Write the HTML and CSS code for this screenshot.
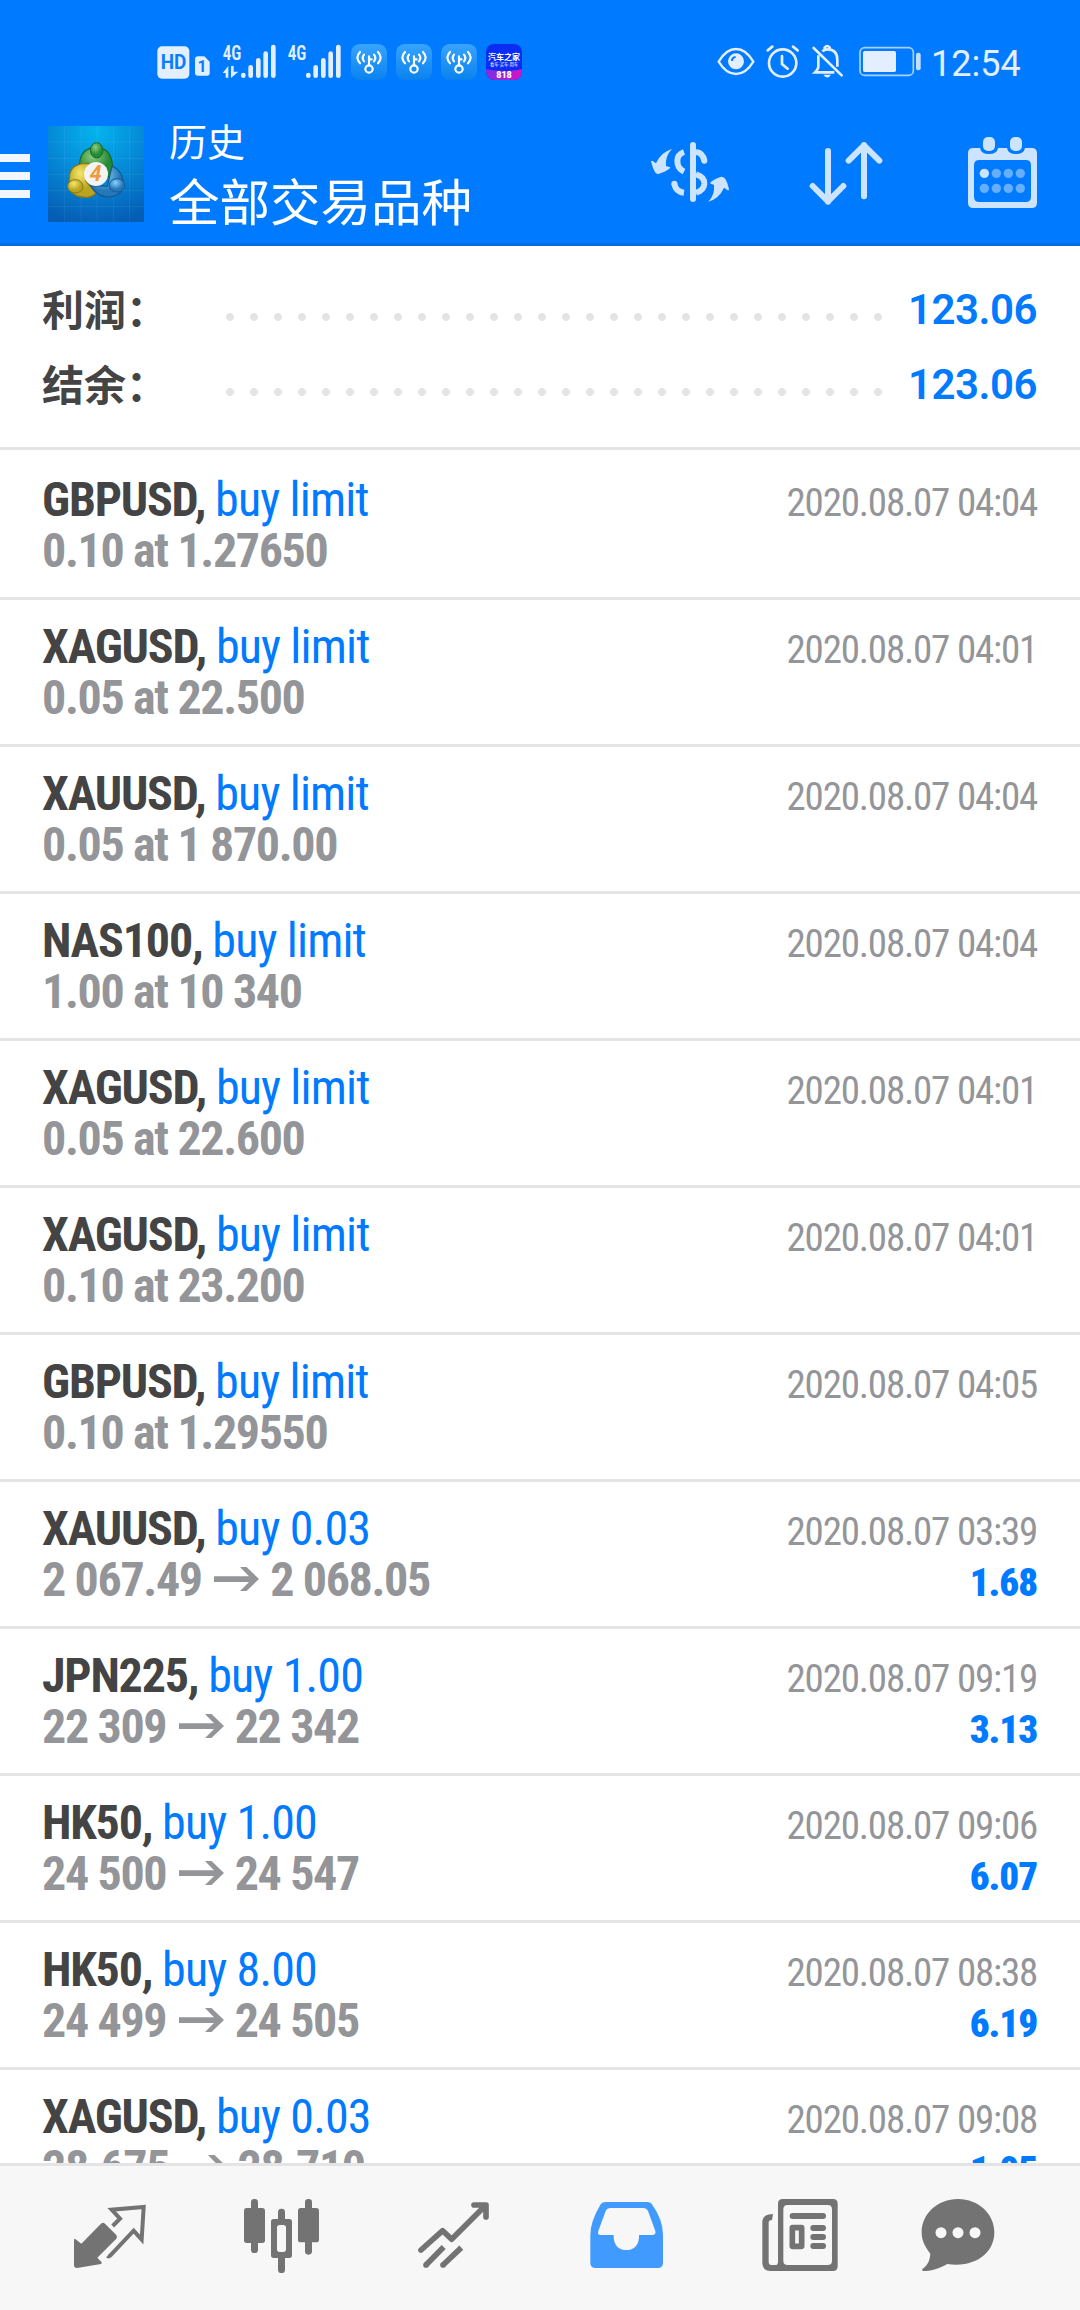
FILE: index.html
```html
<!DOCTYPE html>
<html lang="zh-CN">
<head>
<meta charset="utf-8">
<title>历史</title>
<link rel="stylesheet" href="styles.css">
</head>
<body>
<svg class="defs" aria-hidden="true">
  <defs>
    <linearGradient id="key-bg" x1="0" y1="0" x2="0" y2="1"><stop offset="0" stop-color="#38a4ff"/><stop offset="1" stop-color="#0a82ee"/></linearGradient>
    <symbol id="key" viewBox="0 0 108 108">
      <rect width="108" height="108" rx="26" fill="url(#key-bg)"/>
      <g fill="none" stroke="#fff" stroke-width="6.500" stroke-linecap="round">
        <circle cx="54" cy="75" r="11"/>
        <path d="M54 64V37M55 46h7M39 32q-8 10 0 20M27 24q-6 6-8 17q1 10 8 17M69 32q8 10 0 20M81 24q6 6 8 17q-1 10-8 17"/>
      </g>
    </symbol>
    <symbol id="bars" viewBox="0 0 110 108">
      <g stroke="#e3efff" stroke-width="14" stroke-linecap="round"><path d="M9 93v2M31 70v25M54 49v46M76 29v66M99 9v86"/></g>
    </symbol>
    <symbol id="arrow" viewBox="0 0 45 26">
      <path d="M0 10.300h35L26 1h6.500L45 13 32.500 25H26l9-9.100H0z" fill="#949599"/>
    </symbol>
  </defs>
</svg>
<div class="screen">
  <header class="header">
    <div class="status">
      <svg class="hd" width="33" height="36" viewBox="51 42 99 108"><rect x="52" y="49" width="96" height="97" rx="14" fill="#e3efff"/><text x="62" y="118" font-size="58" font-weight="700" textLength="77" lengthAdjust="spacingAndGlyphs" fill="#0a7dff">HD</text></svg>
      <svg class="sim" width="16" height="36" viewBox="162 42 48 108"><path d="M175 79h18l16 16v34q0 8-8 8h-27q-9 0-9-8V88q0-9 10-9z" fill="#e3efff"/><text x="186" y="127" text-anchor="middle" font-size="48" font-weight="700" fill="#0a7dff">1</text></svg>
      <svg class="sig" width="55" height="36" viewBox="246 42 165 108"><text class="cond" x="248" y="90" font-size="60" font-weight="600" textLength="56" lengthAdjust="spacingAndGlyphs" fill="#e3efff">4G</text><use href="#bars" x="301" y="42" width="110" height="108"/><path d="M248 129l17-21v35h-8v-14zM273 108h8v17h14l-22 19z" fill="#e3efff"/></svg>
      <svg class="sig2" width="55" height="36" viewBox="441 42 165 108"><text class="cond" x="443" y="90" font-size="60" font-weight="600" textLength="56" lengthAdjust="spacingAndGlyphs" fill="#e3efff">4G</text><use href="#bars" x="496" y="42" width="110" height="108"/></svg>
      <svg class="app" width="36" height="36"><use href="#key"/></svg>
      <svg class="app" width="36" height="36"><use href="#key"/></svg>
      <svg class="app" width="36" height="36"><use href="#key"/></svg>
      <svg class="app" width="36" height="36" viewBox="0 0 108 108">
        <defs><clipPath id="rr"><rect width="108" height="108" rx="24"/></clipPath><linearGradient id="pk"><stop offset="0" stop-color="#7a30e0"/><stop offset="1" stop-color="#d414c4"/></linearGradient></defs>
        <g clip-path="url(#rr)"><rect width="108" height="108" fill="#0a2cf5"/><path d="M0 76q54 10 108 0v32H0z" fill="url(#pk)"/></g>
        <g fill="#fff" text-anchor="middle"><text x="54" y="49" font-size="24" font-weight="700">汽车之家</text><text x="54" y="65" font-size="13">看车·买车·用车</text><text x="54" y="103" font-size="27" font-weight="900">818</text></g>
      </svg>
      <svg class="eye" width="38" height="36" viewBox="51 42 114 108"><path d="M56 95q22-38 52-38t52 38q-22 37-52 37T56 95z" fill="none" stroke="#e3efff" stroke-width="7"/><circle cx="108" cy="94" r="24" fill="#e3efff"/><path d="M96 93q0-11 11-12" fill="none" stroke="#0a7dff" stroke-width="6"/></svg>
      <svg class="alarm" width="35" height="36" viewBox="195 42 105 108"><g fill="none" stroke="#e3efff" stroke-width="8" stroke-linecap="round"><circle cx="248" cy="99" r="41"/><path d="M246 78v24l17 14M203 61l14-11M279 50l14 11"/></g></svg>
      <svg class="bell" width="32" height="36" viewBox="333 42 96 108"><g fill="none" stroke="#e3efff" stroke-width="8"><path d="M341 54l84 82" stroke-linecap="round"/><path d="M355 76v34q0 7-10 17h58M367 64q6-6 15-6q30 0 30 32v20M374 58v-5q7-10 15 0v5"/></g><path d="M370 134h23q-11 17-23 0z" fill="#e3efff"/></svg>
      <svg class="battery" width="63" height="36" viewBox="477 42 189 108"><rect x="480" y="53" width="160" height="83" rx="14" fill="none" stroke="#a9d0ff" stroke-width="5"/><rect x="489" y="63" width="99" height="63" rx="5" fill="#e3efff"/><rect x="648" y="68" width="14" height="53" rx="6" fill="#c4dfff"/></svg>
      <span class="clock">12:54</span>
    </div>
    <div class="bar">
      <svg class="menu" width="30" height="44" viewBox="0 0 30 44"><path d="M0 0h30v8H0zM0 18h30v8H0zM0 36h30v8H0z" fill="#f0f7ff"/></svg>
      <svg class="logo" width="96" height="96" viewBox="24 18 288 288">
        <defs>
          <radialGradient id="lb" cx=".5" cy=".05" r="1"><stop offset="0" stop-color="#04b4ee"/><stop offset=".5" stop-color="#0588d6"/><stop offset="1" stop-color="#055cb4"/></radialGradient>
          <radialGradient id="gr" cx=".4" cy=".3"><stop offset="0" stop-color="#8fcc80"/><stop offset="1" stop-color="#238a35"/></radialGradient>
          <radialGradient id="ye" cx=".4" cy=".3"><stop offset="0" stop-color="#f5e66a"/><stop offset="1" stop-color="#b9a41f"/></radialGradient>
          <radialGradient id="bl" cx=".4" cy=".3"><stop offset="0" stop-color="#8bd0f8"/><stop offset="1" stop-color="#2478ba"/></radialGradient>
        </defs>
        <rect x="24" y="18" width="288" height="288" fill="url(#lb)"/>
        <path d="M74 18v288M123 18v288M171 18v288M220 18v288M268 18v288M24 66h288M24 115h288M24 163h288M24 212h288M24 260h288" stroke="#fff" stroke-opacity=".1" stroke-width="2"/>
        <path d="M118 142q0-60 52-60t49 86l-12 4-37-38-37 2z" fill="url(#gr)" stroke="#176a2a" stroke-width="4"/>
        <path d="M146 130q-58-2-58 46v30q14 28 54 26 18-2 26-14l-30-34z" fill="url(#ye)" stroke="#85791b" stroke-width="4"/>
        <path d="M216 138q34 16 34 56-2 36-50 37-30-3-48-34l50 2z" fill="url(#bl)" stroke="#155b94" stroke-width="4"/>
        <ellipse cx="170" cy="91" rx="19" ry="23" fill="url(#gr)" stroke="#176a2a" stroke-width="3"/>
        <ellipse cx="106" cy="199" rx="23" ry="20" fill="url(#ye)" stroke="#85791b" stroke-width="3"/>
        <ellipse cx="231" cy="196" rx="23" ry="20" fill="url(#bl)" stroke="#155b94" stroke-width="3"/>
        <circle cx="168" cy="162" r="36" fill="#f2f3f4"/>
        <text x="167" y="184" text-anchor="middle" font-size="64" font-style="italic" font-weight="700" fill="#f09a3e">4</text>
      </svg>
      <div class="titles"><div class="title">历史</div><div class="subtitle">全部交易品种</div></div>
      <svg class="i-cur" width="80" height="75" viewBox="60 45 240 225">
        <path d="M189 75v162" stroke="#cce4ff" stroke-width="18" stroke-linecap="round"/>
        <path d="M162 96q-20 7-20 27 0 22 20 32M133 191q4 24 29 27M198 96q20 2 25 26M198 163q26 7 25 29-2 20-25 26" fill="none" stroke="#cce4ff" stroke-width="18"/>
        <circle cx="133" cy="191" r="9" fill="#cce4ff"/><circle cx="223" cy="122" r="9" fill="#cce4ff"/>
        <path d="M126 87q-21 21-18 51l13 4q-2 8-30 18-7 4-13 0-7-6-15-36 2-3 5-1l10 7q14-33 48-43zM235 245q20-21 17-50l-12-5q2-8 31-19 7-2 13 4 8 9 13 34-2 3-5 1l-10-7q-14 32-47 42z" fill="#cce4ff"/>
      </svg>
      <svg class="i-sort" width="80" height="75" viewBox="528 45 240 225"><path d="M594 93v152M548 198l46 46 46-46M702 229V75M656 122l46-46 46 46" fill="none" stroke="#cce4ff" stroke-width="18" stroke-linecap="round" stroke-linejoin="round"/></svg>
      <svg class="i-cal" width="80" height="75" viewBox="999 45 240 225">
        <path fill-rule="evenodd" d="M1030 84h20q3 18 27 18t27-18h27q3 18 27 18t27-18h20q16 0 16 16v148q0 16-16 16h-175q-16 0-16-16V100q0-16 16-16zM1048 120q-16 0-16 16v94q0 16 16 16h139q16 0 16-16v-94q0-16-16-16z" fill="#cce4ff"/>
        <rect x="1059" y="51" width="36" height="42" rx="15" fill="#cce4ff"/><rect x="1140" y="51" width="36" height="42" rx="15" fill="#cce4ff"/>
        <circle cx="1063" cy="160" r="14" fill="#cce4ff"/>
        <g fill="#66afff"><circle cx="1099" cy="160" r="14"/><circle cx="1135" cy="160" r="14"/><circle cx="1171" cy="160" r="14"/><circle cx="1063" cy="205" r="14"/><circle cx="1099" cy="205" r="14"/><circle cx="1135" cy="205" r="14"/><circle cx="1171" cy="205" r="14"/></g>
      </svg>
    </div>
  </header>

  <main class="list">
    <section class="summary">
      <div class="sum"><span class="label">利润：</span><i class="dots"></i><b>123.06</b></div>
      <div class="sum"><span class="label">结余：</span><i class="dots"></i><b>123.06</b></div>
    </section>
    <article class="row first"><div class="line"><span><b>GBPUSD,</b> <em>buy limit</em></span><time>2020.08.07 04:04</time></div><div class="line price">0.10 at 1.27650</div></article>
    <article class="row"><div class="line"><span><b>XAGUSD,</b> <em>buy limit</em></span><time>2020.08.07 04:01</time></div><div class="line price">0.05 at 22.500</div></article>
    <article class="row"><div class="line"><span><b>XAUUSD,</b> <em>buy limit</em></span><time>2020.08.07 04:04</time></div><div class="line price">0.05 at 1 870.00</div></article>
    <article class="row"><div class="line"><span><b>NAS100,</b> <em>buy limit</em></span><time>2020.08.07 04:04</time></div><div class="line price">1.00 at 10 340</div></article>
    <article class="row"><div class="line"><span><b>XAGUSD,</b> <em>buy limit</em></span><time>2020.08.07 04:01</time></div><div class="line price">0.05 at 22.600</div></article>
    <article class="row"><div class="line"><span><b>XAGUSD,</b> <em>buy limit</em></span><time>2020.08.07 04:01</time></div><div class="line price">0.10 at 23.200</div></article>
    <article class="row"><div class="line"><span><b>GBPUSD,</b> <em>buy limit</em></span><time>2020.08.07 04:05</time></div><div class="line price">0.10 at 1.29550</div></article>
    <article class="row"><div class="line"><span><b>XAUUSD,</b> <em>buy 0.03</em></span><time>2020.08.07 03:39</time></div><div class="line price"><span>2 067.49 <svg class="to"><use href="#arrow"/></svg> 2 068.05</span><strong>1.68</strong></div></article>
    <article class="row"><div class="line"><span><b>JPN225,</b> <em>buy 1.00</em></span><time>2020.08.07 09:19</time></div><div class="line price"><span>22 309 <svg class="to"><use href="#arrow"/></svg> 22 342</span><strong>3.13</strong></div></article>
    <article class="row"><div class="line"><span><b>HK50,</b> <em>buy 1.00</em></span><time>2020.08.07 09:06</time></div><div class="line price"><span>24 500 <svg class="to"><use href="#arrow"/></svg> 24 547</span><strong>6.07</strong></div></article>
    <article class="row"><div class="line"><span><b>HK50,</b> <em>buy 8.00</em></span><time>2020.08.07 08:38</time></div><div class="line price"><span>24 499 <svg class="to"><use href="#arrow"/></svg> 24 505</span><strong>6.19</strong></div></article>
    <article class="row"><div class="line"><span><b>XAGUSD,</b> <em>buy 0.03</em></span><time>2020.08.07 09:08</time></div><div class="line price"><span>28.675 <svg class="to"><use href="#arrow"/></svg> 28.710</span><strong>1.05</strong></div></article>
  </main>

  <nav class="tabs">
    <svg viewBox="30 45 240 240"><path d="M42 178q2-2 5 0l17 13 59-60q6-5 12 0l34 34q4 6 0 11l-57 57 13 14q1 4-2 5l-72 12q-9 0-9-9z" fill="#737373"/><path d="M158 138l22-22-25-27 96-8-6 98-24-27-69 73q-6 6-10 3" fill="none" stroke="#737373" stroke-width="12"/></svg>
    <svg viewBox="543 45 240 240"><g fill="#737373"><rect x="552" y="84" width="63" height="105" rx="8"/><rect x="573" y="57" width="21" height="162" rx="10"/><rect x="714" y="84" width="63" height="103" rx="8"/><rect x="735" y="57" width="21" height="167" rx="10"/><path d="M654 120V96q0-10 10.500-10t10.500 10v24zM654 230v39q0 10 10.500 10t10.500-10v-39z"/><path fill-rule="evenodd" d="M641 117h47q8 0 8 8v101q0 8-8 8h-47q-8 0-8-8V125q0-8 8-8zM659 135q-8 0-8 8v65q0 8 8 8h11q8 0 8-8v-65q0-8-8-8z"/></g></svg>
    <svg viewBox="1059 45 240 240"><g fill="none" stroke="#737373" stroke-width="17" stroke-linejoin="round"><path d="M1083 210l65-58 27 26 100-100M1242 75h36v36" stroke-linecap="round"/><path d="M1098 255l53-54M1149 255l55-52"/></g><g fill="#737373"><circle cx="1098" cy="255" r="8.500"/><circle cx="1149" cy="255" r="8.500"/></g></svg>
    <svg viewBox="51 45 240 240"><path fill-rule="evenodd" d="M108 66h124q9 0 14 7 33 47 33 92v83q0 16-16 16H77q-16 0-16-16v-83q0-40 31-92 5-7 16-7zM122 84q-11 0-15 9L85 153q-4 12 7 12h39v8q4 37 38 37t38-37v-8h39q13 0 10-12l-22-60q-4-9-15-9z" fill="#419bff"/></svg>
    <svg viewBox="570 45 240 240"><path fill-rule="evenodd" d="M638 57h151q14 0 14 14v188q0 14-14 14H602q-25 0-25-25V124q2-22 32-22l-3 18q-10 0-10 8v117q0 10 10 10h10q8 0 8-10V71q0-14 14-14zM653 75q-13 0-13 13v154q0 13 13 13h120q13 0 13-13V88q0-13-13-13z" fill="#737373"/><g fill="#737373"><rect x="659" y="99" width="109" height="18" rx="9"/><rect x="721" y="135" width="47" height="18" rx="9"/><rect x="721" y="162" width="47" height="18" rx="9"/><rect x="721" y="189" width="47" height="18" rx="9"/></g><rect x="667" y="143" width="28" height="56" rx="1" fill="none" stroke="#737373" stroke-width="17" stroke-linejoin="round"/></svg>
    <svg viewBox="1044 45 240 240"><path d="M1164 57c62 0 109 45 109 100 0 62-56 107-141 95-26 16-53 21-71 21q-7-2-3-7c15-10 22-26 23-45-17-22-26-40-26-64 0-55 47-100 109-100z" fill="#737373"/><g fill="#f7f7f7"><circle cx="1113" cy="158" r="16.500"/><circle cx="1164" cy="158" r="16.500"/><circle cx="1215" cy="158" r="16.500"/></g></svg>
  </nav>
</div>
</body>
</html>
```
FILE: styles.css
```css
* { box-sizing: border-box; }
body { margin: 0; font-family: Roboto, "Noto Sans CJK SC", sans-serif; }
svg { display: block; flex: none; overflow: visible; }
.defs { position: absolute; width: 0; height: 0; }
.cond { font-family: "Roboto Condensed", Roboto, sans-serif; }
.screen { display: flex; flex-direction: column; width: 1080px; height: 2310px; overflow: hidden; background: #fff; }

.header { height: 246px; background: #007aff; border-bottom: 3px solid #006fe6; color: #fff; }
.status { display: flex; align-items: center; height: 80px; padding: 44px 0 0 157px; }
.sim { margin-left: 4px; }
.sig { margin-left: 12px; }
.sig2 { margin-left: 10px; }
.app { margin-left: 9px; }
.eye { margin-left: 195px; }
.alarm { margin-left: 10px; }
.bell { margin-left: 11px; }
.battery { margin-left: 16px; }
.clock { margin: 3px 0 0 9px; font-size: 36px; line-height: 36px; color: #e3efff; }

.bar { display: flex; align-items: flex-start; padding-top: 35px; }
.menu { margin-top: 39px; }
.logo { margin: 11px 0 0 18px; }
.titles { width: 481px; margin-left: 25px; padding-top: 1px; white-space: nowrap; }
.title { font-size: 38px; line-height: 54px; }
.subtitle { font-size: 50.500px; line-height: 68px; }
.bar .i-cur { margin: 20px 0 0 0; }
.bar .i-sort { margin: 20px 0 0 76px; }
.bar .i-cal { margin: 20px 0 0 77px; }

.list { flex: 1; min-height: 0; overflow: hidden; }
.summary { height: 201px; padding: 25px 43px 0 42px; }
.sum { display: flex; align-items: center; height: 75px; font-size: 42px; font-weight: 700; }
.label { width: 176px; margin-top: -3px; color: #444; }
.dots { width: 672px; height: 8px; margin-top: 16px; background: radial-gradient(circle, #e4e4e4 3.600px, transparent 4.200px) 0 0 / 24px 8px; }
.sum b { margin: 1px 0 0 auto; color: #007aff; letter-spacing: -0.500px; font-weight: 650; }

.row { height: 147px; padding: 21px 43px 0 42px; border-top: 3px solid #e4e4e4; font: 48px/51px "Roboto Condensed", Roboto, sans-serif; }
.row.first { height: 150px; padding-top: 24px; }
.line { display: flex; justify-content: space-between; align-items: baseline; height: 51px; white-space: nowrap; letter-spacing: -1.200px; }
.line b { color: #444; }
.line em { color: #007aff; font-style: normal; letter-spacing: -0.850px; }
.line time { color: #949599; font-size: 39px; }
.line.price { color: #949599; font-weight: 700; letter-spacing: -1.350px; }
.price strong { color: #007aff; font-size: 39px; letter-spacing: -1.100px; }
.to { display: inline-block; width: 45px; height: 26px; margin: 0 1px 0 3px; vertical-align: 4px; }

.tabs { display: grid; grid-template-columns: 171px 172px 174px 173px 158px 80px; height: 147px; padding: 29px 0 0 70px; background: #f7f7f7; border-top: 3px solid #e4e4e4; }
.tabs svg { width: 80px; height: 80px; }
```
